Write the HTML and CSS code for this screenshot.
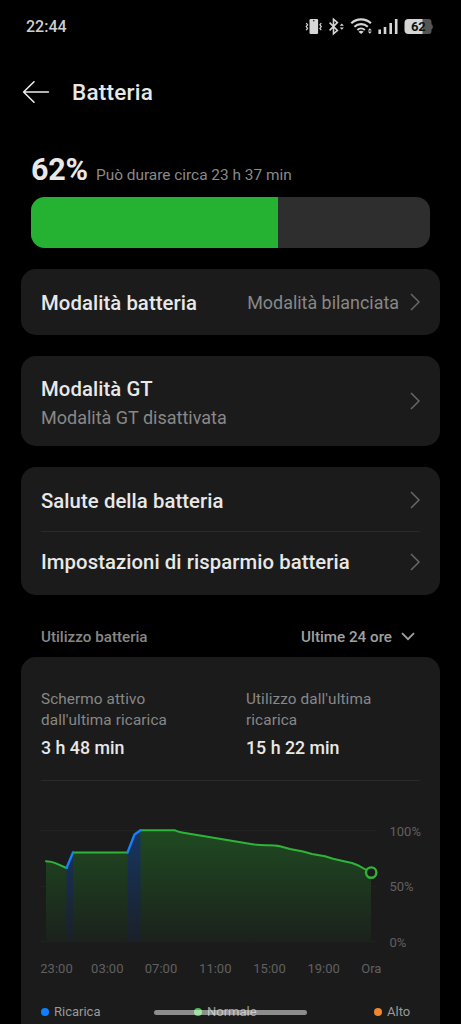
FILE: index.html
```html
<!DOCTYPE html>
<html lang="it">
<head>
<meta charset="utf-8">
<meta name="viewport" content="width=device-width, initial-scale=1">
<title>Batteria</title>
<link rel="stylesheet" href="styles.css">
</head>
<body>
<div class="screen">
  <header class="status">
    <span class="clock">22:44</span>
    <svg class="status-icons" width="130" height="24" viewBox="304 14 130 24" fill="none" stroke="#d6d6d6">
      <!-- vibrate -->
      <rect x="309.5" y="19" width="8.6" height="15" rx="1.2" fill="#d6d6d6" stroke="none"/>
      <circle cx="313.8" cy="20.8" r=".7" fill="#000" stroke="none"/>
      <path stroke-width="1.2" d="M306.2 23l1.4 1.8-1.4 1.8 1.4 1.8-1.4 1.8M321.3 23l-1.4 1.8 1.4 1.8-1.4 1.8 1.4 1.8"/>
      <!-- bluetooth -->
      <path stroke-width="1.6" d="M329.6 22.6l7.8 7.8-3.9 3.4V19.2l3.9 3.4-7.8 7.8"/>
      <path fill="#d6d6d6" stroke="none" d="M341.8 23.4l2.1 2.3h-4.2zM341.8 29.8l2.1-2.3h-4.2z"/>
      <!-- wifi -->
      <path stroke-width="2.1" d="M351.3 23.3a14.3 14.3 0 0 1 19.6 0M354.4 26.8a9.8 9.8 0 0 1 13.4 0M357.4 30a5.4 5.4 0 0 1 7.4 0"/>
      <path fill="#d6d6d6" stroke="none" d="M358.5 31.7q2.6-2 5.2 0L361.1 34zM369.8 28.2l2 2.2h-4zM369.8 33.8l2-2.2h-4z"/>
      <!-- signal -->
      <path stroke-width="2.6" d="M379.7 34v-4.5M385 34v-7M390.7 34V23M396.2 34V19"/>
      <!-- battery -->
      <path fill="#555" stroke="none" d="M409 19h19.5a3 3 0 0 1 3 3v2.2q1.4.5 1.4 2.6t-1.4 2.6V31a3 3 0 0 1-3 3H409z"/>
      <path fill="#d6d6d6" stroke="none" d="M408.5 19H422.5v15h-14a4 4 0 0 1-4-4v-7a4 4 0 0 1 4-4z"/>
      <text class="battery-level" x="418.2" y="31.2" text-anchor="middle">62</text>
    </svg>
  </header>

  <nav class="titlebar">
    <svg width="28" height="24" viewBox="0 0 28 24" fill="none" stroke="#ececec" stroke-width="1.6" stroke-linecap="round" stroke-linejoin="round"><path d="M12 1.8L1.6 12 12 22.2M1.6 12H26.4"/></svg>
    <h1>Batteria</h1>
  </nav>

  <section class="charge">
    <div class="charge-text"><strong>62%</strong><span>Può durare circa 23 h 37 min</span></div>
    <div class="meter"><div class="meter-fill" style="width:62%"></div></div>
  </section>

  <section class="card mode">
    <div class="row">
      <span class="label">Modalità batteria</span>
      <span class="value">Modalità bilanciata</span>
      <svg class="chev" viewBox="0 0 10 18"><path d="M1 1l8 8-8 8"/></svg>
    </div>
  </section>

  <section class="card gt">
    <div class="row">
      <div class="stack"><span class="label">Modalità GT</span><span class="sub">Modalità GT disattivata</span></div>
      <svg class="chev" viewBox="0 0 10 18"><path d="M1 1l8 8-8 8"/></svg>
    </div>
  </section>

  <section class="card settings">
    <div class="row">
      <span class="label">Salute della batteria</span>
      <svg class="chev" viewBox="0 0 10 18"><path d="M1 1l8 8-8 8"/></svg>
    </div>
    <hr>
    <div class="row">
      <span class="label">Impostazioni di risparmio batteria</span>
      <svg class="chev" viewBox="0 0 10 18"><path d="M1 1l8 8-8 8"/></svg>
    </div>
  </section>

  <div class="usage-head">
    <span class="usage-title">Utilizzo batteria</span>
    <span class="range">Ultime 24 ore</span>
    <svg width="14" height="9" viewBox="0 0 14 9" fill="none" stroke="#a0a0a0" stroke-width="1.8"><path d="M1 1.2l6 6 6-6"/></svg>
  </div>

  <section class="card usage">
    <div class="stats">
      <div class="stat"><p>Schermo attivo<br>dall'ultima ricarica</p><b>3 h 48 min</b></div>
      <div class="stat"><p>Utilizzo dall'ultima<br>ricarica</p><b>15 h 22 min</b></div>
    </div>
    <hr>
    <svg class="chart" width="399" height="190" viewBox="41 800 399 190">
      <defs>
        <linearGradient id="green" gradientUnits="userSpaceOnUse" x1="0" y1="830" x2="0" y2="942">
          <stop offset="0" stop-color="#1f4a21"/><stop offset="1" stop-color="#1b211c"/>
        </linearGradient>
        <linearGradient id="blue" gradientUnits="userSpaceOnUse" x1="0" y1="830" x2="0" y2="942">
          <stop offset="0" stop-color="#173663"/><stop offset="1" stop-color="#1a2028"/>
        </linearGradient>
      </defs>
      <path class="grid" d="M41 830.5H376M41 886.5H376M41 941.5H376"/>
      <path fill="url(#green)" d="M46 861.3L55 863 66.5 868 73 852.5H127.5L134.5 834.5 140.5 830.3H175L182 832.5 230 840.5 254 844.4 266 845.3 280 846.2 290 849 303 851.5 312 854 325 856.3 333 858.7 345 861.5 352 863 359 865.8 371 872.5V942H46z"/>
      <path fill="url(#blue)" d="M66.5 868L73 852.5V942H66.5zM127.5 852.5L134.5 834.5 140.5 830.3V942H127.5z"/>
      <path class="line" d="M46 861.3Q52 861.5 56 863.3L66.5 868M73 852.5H127.5M140.5 830.3H175Q178 831.8 182 832.5L230 840.5 254 844.4Q260 845 266 845.3 275 845.2 280 846.2L290 849 303 851.5 312 854 325 856.3 333 858.7 345 861.5 352 863 359 865.8 366.5 870"/>
      <path class="line charging" d="M66.5 868L73 852.5M127.5 852.5L134.5 834.5 140.5 830.3"/>
      <circle cx="371.2" cy="872.6" r="5.2" fill="#1b1b1b" stroke="#2fb439" stroke-width="2.4"/>
      <g class="axis">
        <text x="389.5" y="835.5">100%</text><text x="389.5" y="891">50%</text><text x="389.5" y="947">0%</text>
        <g text-anchor="middle">
          <text x="56.5" y="972.5">23:00</text><text x="107.3" y="972.5">03:00</text><text x="161" y="972.5">07:00</text>
          <text x="215.3" y="972.5">11:00</text><text x="269.5" y="972.5">15:00</text><text x="323.7" y="972.5">19:00</text><text x="371.3" y="972.5">Ora</text>
        </g>
      </g>
    </svg>
    <div class="legend">
      <span><i class="dot charging-dot"></i>Ricarica</span>
      <span><i class="dot normal-dot"></i>Normale</span>
      <span><i class="dot high-dot"></i>Alto</span>
    </div>
  </section>
  <div class="home-bar"></div>
</div>
</body>
</html>
```

FILE: styles.css
```css
* { box-sizing: border-box; }
body { margin: 0; background: #000; font-family: Roboto, "Liberation Sans", sans-serif; color: #e8e8e8; }
.screen { position: relative; width: 461px; height: 1024px; overflow: hidden; display: flex; flex-direction: column; }
svg { display: block; flex: none; }
h1, p { margin: 0; }
hr { margin: 0; border: 0; height: 1px; background: #2a2a2a; }

.status { height: 52px; padding: 14px 27px 0 26px; display: flex; justify-content: space-between; }
.clock { font-size: 16px; font-weight: 500; line-height: 26px; color: #cfcfcf; }
.battery-level { font-size: 13px; font-weight: 700; letter-spacing: -.3px; fill: #111; stroke: none; }

.titlebar { height: 80px; padding-left: 22px; display: flex; align-items: center; gap: 22px; }
.titlebar h1 { font-size: 22.5px; font-weight: 500; line-height: 30px; letter-spacing: .25px; }

.charge { padding: 18px 31px 0; }
.charge-text { height: 47px; display: flex; align-items: baseline; gap: 8px; line-height: 39px; }
.charge-text strong { font-size: 30.5px; font-weight: 700; letter-spacing: -.2px; }
.charge-text span { font-size: 15.4px; color: #8a8a8a; }
.meter { height: 51px; border-radius: 14px; background: #2e2e2e; overflow: hidden; }
.meter-fill { height: 100%; background: #25b233; }

.card { margin: 0 21px; padding: 0 20px; border-radius: 15px; background: #1b1b1b; }
.row { display: flex; align-items: center; }
.label { font-size: 20.3px; font-weight: 500; line-height: 26px; letter-spacing: .08px; margin-right: auto; }
.value, .sub { font-size: 18px; line-height: 24px; color: #888; }
.value { font-size: 17.9px; }
.chev { width: 10px; height: 18px; margin-left: 11px; fill: none; stroke: #696969; stroke-width: 1.5; }
.mode { margin-top: 21px; }
.mode .row { height: 66px; }
.mode .label, .mode .value { padding-top: 2px; }
.gt { margin-top: 21px; }
.gt .row { height: 90px; }
.stack { display: flex; flex-direction: column; gap: 4px; margin-right: auto; padding-top: 4px; }
.settings { margin-top: 21px; padding-top: 3px; padding-bottom: 2px; }
.settings .row { height: 61px; }
.settings .chev { margin-bottom: 2px; }
.settings hr + .row .label { margin-bottom: 2px; }

.usage-head { height: 62px; padding: 21px 46px 0 41px; display: flex; align-items: center; line-height: 20px; font-size: 15.2px; }
.usage-title { margin-right: auto; color: #888; font-weight: 500; }
.range { margin-right: 9px; color: #a0a0a0; font-weight: 500; }

.usage { flex: 1; padding-top: 32px; padding-right: 0; border-radius: 15px 15px 0 0; }
.usage hr { margin-right: 20px; }
.stats { height: 91px; display: grid; grid-template-columns: 205px 1fr; }
.stat p { font-size: 15.3px; line-height: 21px; letter-spacing: .1px; color: #888; }
.stat b { display: block; margin-top: 6px; font-size: 17.8px; font-weight: 500; line-height: 22px; }
.chart { margin-top: 19px; }
.grid { fill: none; stroke: #222; }
.line { fill: none; stroke: #2fb439; stroke-width: 2; stroke-linejoin: round; stroke-linecap: round; }
.charging { stroke: #1782f5; stroke-width: 2.3; }
.axis { font-size: 13px; fill: #606060; }
.legend { height: 22px; margin-top: 11px; display: grid; grid-template-columns: 153px 180px 1fr; font-size: 13px; line-height: 22px; color: #999; }
.legend span { display: flex; align-items: center; gap: 5px; }
.dot { width: 8px; height: 8px; border-radius: 50%; }
.charging-dot { background: #0c80ff; }
.normal-dot { background: #45c74b; }
.high-dot { background: #ee872d; }
.home-bar { position: absolute; left: 154px; top: 1010px; width: 153px; height: 5px; border-radius: 3px; background: rgba(255, 255, 255, .5); }
```
